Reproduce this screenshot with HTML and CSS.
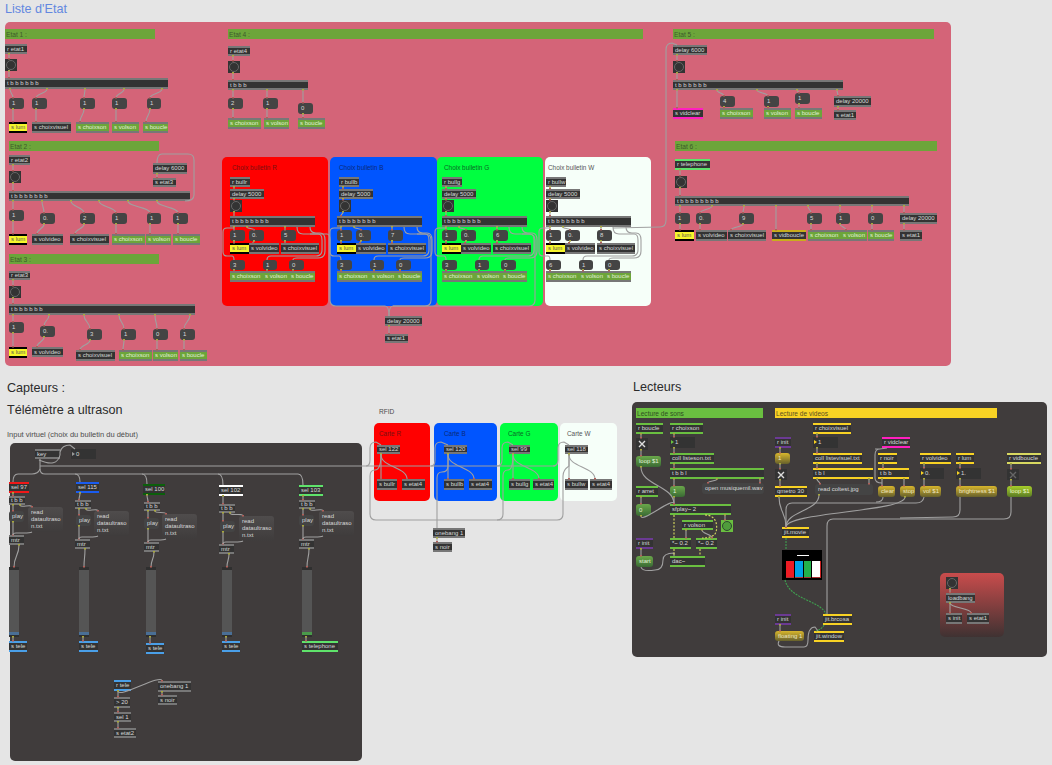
FILE: index.html
```html
<!DOCTYPE html>
<html lang="fr">

<head>
 <meta charset="UTF-8">
 <meta name="viewport" content="width=device-width">
 <title>Liste d'Etat</title>
 <link rel="stylesheet" href="styles.css">
</head>

<body>

 <div class="canvas" id="canvas">

  <h1 class="titre titre-etat">Liste d'Etat</h1>
  <div class="panel panel-etat"></div>

  <div class="panel choix choix-r"><span>Choix bulletin R</span></div>
  <div class="panel choix choix-b"><span>Choix bulletin B</span></div>
  <div class="panel choix choix-g"><span>Choix bulletin G</span></div>
  <div class="panel choix choix-w"><span>Choix bulletin W</span></div>

  <h2 class="titre titre-capteurs">Capteurs :</h2>
  <h2 class="titre titre-telemetre">Télémètre a ultrason</h2>
  <p class="legende legende-input">Input virtuel (choix du bulletin du début)</p>
  <div class="panel panel-capteurs"></div>

  <p class="legende legende-rfid">RFID</p>
  <div class="panel carte carte-r"><span>Carte R</span></div>
  <div class="panel carte carte-b"><span>Carte B</span></div>
  <div class="panel carte carte-g"><span>Carte G</span></div>
  <div class="panel carte carte-w"><span>Carte W</span></div>

  <h2 class="titre titre-lecteurs">Lecteurs</h2>
  <div class="panel panel-lecteurs"></div>
  <div class="panel panel-init"></div>

  <div class="pwindow">
   <i class="dash"></i>
   <i class="barre rouge"></i><i class="barre bleu"></i><i class="barre vert"></i><i class="barre blanc"></i>
  </div>

 </div>

 <script src="patch.js"></script>

</body>

</html>
```

FILE: styles.css
```css
/* Page */
* {
    margin: 0;
    padding: 0;
    box-sizing: border-box;
}

body {
    background-color: #e5e5e5;
    font-family: "Liberation Sans", Arial, sans-serif;
}

.canvas {
    position: relative;
    width: 1052px;
    height: 765px;
    overflow: hidden;
}

/* Titres */
.titre {
    position: absolute;
    font-weight: normal;
    font-size: 12.6px;
    line-height: 14px;
    color: #2b2b2b;
    white-space: nowrap;
}

.titre-etat { left: 5px; top: 2px; color: #6388e0; }
.titre-capteurs { left: 7px; top: 381px; }
.titre-telemetre { left: 7px; top: 403px; }
.titre-lecteurs { left: 633px; top: 380px; }

.legende {
    position: absolute;
    font-size: 7.5px;
    line-height: 8px;
    color: #4c4c4c;
    white-space: nowrap;
}

.legende-input { left: 7px; top: 431px; }
.legende-rfid { left: 379px; top: 408px; font-size: 6.6px; }

/* Panneaux */
.panel {
    position: absolute;
    border-radius: 5px;
}

.panel-etat { left: 5px; top: 22px; width: 946px; height: 344px; background-color: #d46478; }
.panel-capteurs { left: 10px; top: 443px; width: 352px; height: 318px; background-color: #403c3c; }
.panel-lecteurs { left: 632px; top: 402px; width: 415px; height: 255px; background-color: #403c3c; }
.panel-init {
    left: 940px;
    top: 573px;
    width: 64px;
    height: 64px;
    background: linear-gradient(#c94c4c, #3f3232);
}

.choix { top: 157px; height: 149px; font-size: 6.4px; }
.choix span { position: absolute; top: 7px; white-space: nowrap; }
.choix-r { left: 222px; width: 106px; background-color: #ff0000; color: #7a1010; }
.choix-r span { left: 10px; }
.choix-b { left: 330px; width: 107px; background-color: #0055ff; color: #0b2a78; }
.choix-b span { left: 9px; }
.choix-g { left: 437px; width: 106px; background-color: #00ff40; color: #0a6a25; }
.choix-g span { left: 7px; }
.choix-w { left: 545px; width: 106px; background-color: #f6fff9; color: #555; }
.choix-w span { left: 3px; }

.carte { top: 423px; height: 78px; font-size: 6.4px; }
.carte span { position: absolute; top: 7px; white-space: nowrap; }
.carte-r { left: 374px; width: 56px; background-color: #ff0000; color: #7a1010; }
.carte-r span { left: 5px; }
.carte-b { left: 434px; width: 63px; background-color: #0055ff; color: #0b2a78; }
.carte-b span { left: 10px; }
.carte-g { left: 500px; width: 58px; background-color: #00ff40; color: #0a6a25; }
.carte-g span { left: 8px; }
.carte-w { left: 560px; width: 57px; background-color: #f6fff9; color: #555; }
.carte-w span { left: 7px; }

/* Objets du patch */
.n {
    position: absolute;
    display: flex;
    align-items: center;
    padding-left: 2px;
    font-size: 6px;
    line-height: 7px;
    color: #d8d8d8;
    white-space: pre;
    overflow: hidden;
}

.obj {
    background-color: #333;
    border-top: 2px solid var(--trait, #777);
    border-bottom: 2px solid var(--trait, #777);
}

.snd { background-color: #6ca53a; color: #e2efd6; }
.lum { background-color: #f6f62c; color: #555; --trait: #000; }
.mag { --trait: #ff1fbf; }
.rou { --trait: #f01818; }
.ble { --trait: #1a5cf0; }
.sap { --trait: #0b5f0b; }
.bla { --trait: #fff; }
.ver { --trait: #5fe36b; }
.cie { --trait: #4a9fe8; }
.lim { --trait: #6abf40; }
.jau { --trait: #f8d224; }
.vio { --trait: #6b3a93; }
.pal { --trait: #d8d860; }
.vid { --trait: #c9ad1c; }

.msg {
    background-color: #444;
    border-radius: 3px;
    padding-left: 3px;
}

.long {
    background: linear-gradient(#4f4c4c, #3f3c3c);
    align-items: flex-start;
    padding: 2px 0 0 3px;
    line-height: 7px;
}

.gv { background: linear-gradient(#6aa84a, #3a6a34); color: #e3f0da; }
.gj { background: linear-gradient(#d8b62c, #66602c); color: #efe6c0; }
.gl { background: linear-gradient(#a8cf2a, #5a7a24); color: #eef5cc; }

.num { background-color: #333; padding-left: 5px; }
.num::before {
    content: "";
    position: absolute;
    left: 1px;
    top: 3px;
    border-left: 3px solid var(--trait, #999);
    border-top: 2.5px solid transparent;
    border-bottom: 2.5px solid transparent;
}

.note {
    background-color: #6ca53a;
    color: #3d5a2c;
    padding-left: 1px;
    font-size: 6.6px;
}

.note-v { background-color: #6abf40; color: #2f4f22; }
.note-j { background-color: #f8d224; color: #5c5020; }

.bang {
    background-color: #333;
    padding: 0;
    justify-content: center;
}

.bang::before {
    content: "";
    width: 8px;
    height: 8px;
    border: 1px solid #666;
    border-radius: 50%;
}

.bang-v { background-color: #6abf40; }
.bang-v::before { border-color: #2e4a2e; background-color: #4f9c3c; }

.tog {
    background-color: #333;
    padding: 0;
    justify-content: center;
}

.tog svg { width: 8px; height: 8px; stroke: #ddd; stroke-width: 1.4; }
.tog-off svg { stroke: #666; }

.slider {
    background-color: #555;
    border-top: 3px solid #2f2f2f;
    border-bottom: 2px solid #2f2f2f;
    padding: 0;
    display: block;
}

.slider i {
    position: absolute;
    left: 0;
    right: 0;
    bottom: 0;
    height: 3px;
    background-color: #4a6f96;
}

.slider-v i { background-color: #4a9a4a; }

/* Petites marques d'attribut */
.attr::after {
    content: "";
    position: absolute;
    top: -2px;
    right: 3px;
    width: 4px;
    height: 1px;
    background-color: #d0d0d0;
}

/* Fenetre video */
.pwindow {
    position: absolute;
    left: 782px;
    top: 550px;
    width: 40px;
    height: 30px;
    background-color: #000;
    z-index: 1;
}

.pwindow i { position: absolute; }
.dash { left: 15px; top: 5px; width: 12px; height: 1px; background-color: #fff; }
.barre { top: 11px; height: 17px; border-bottom: 1px solid #a33; }
.rouge { left: 4px; width: 8px; background-color: #ed1c24; }
.bleu { left: 13px; width: 8px; background-color: #00a2e8; }
.vert { left: 22px; width: 7px; background-color: #22b14c; }
.blanc { left: 30px; width: 9px; background-color: #fff; border-right: 1px solid #c22; }

/* Cordons */
.cords {
    position: absolute;
    left: 0;
    top: 0;
    z-index: 2;
    pointer-events: none;
}

.cords path { fill: none; stroke: #a0a0a0; stroke-width: 1.1; }
.cords .sig { stroke: #d8dc60; stroke-dasharray: 2 1.5; }
.cords .vid-c { stroke: #3f9f4f; stroke-dasharray: 2 1; }
.cords .out { fill: #a8a83a; }
.cords .in { fill: #b0605a; }
```

FILE: patch.js
```js
// Dessine le patch : objets puis cordons.
const canvas = document.getElementById('canvas')

// [x1, y1, x2, y2, texte, classes]
const noeuds = [
 // Etat 1
 [5, 29, 155, 39, 'Etat 1 :', 'note'],
 [5, 44, 27, 54, 'r etat1', 'obj'],
 [5, 59, 17, 71, '', 'bang'],
 [5, 78, 168, 89, 't b b b b b b', 'obj'],
 [9, 98, 24, 109, '1', 'msg'], [32, 98, 47, 109, '1', 'msg'], [80, 98, 95, 109, '1', 'msg'],
 [112, 98, 127, 109, '1', 'msg'], [147, 98, 161, 109, '1', 'msg'],
 [9, 122, 27, 133, 's lum', 'obj lum'], [32, 122, 71, 133, 's choixvisuel', 'obj'],
 [76, 122, 109, 133, 's choixson', 'obj snd'], [112, 122, 139, 133, 's volson', 'obj snd'],
 [143, 122, 168, 133, 's boucle', 'obj snd'],
 // Etat 4
 [228, 29, 643, 39, 'Etat 4 :', 'note'],
 [228, 46, 250, 56, 'r etat4', 'obj'],
 [228, 61, 240, 73, '', 'bang'],
 [228, 80, 308, 90, 't b b b', 'obj'],
 [228, 98, 243, 109, '2', 'msg'], [263, 98, 278, 109, '1', 'msg'], [298, 103, 313, 114, '0', 'msg'],
 [228, 118, 261, 129, 's choixson', 'obj snd'], [264, 118, 289, 129, 's volson', 'obj snd'],
 [298, 118, 325, 129, 's boucle', 'obj snd'],
 // Etat 2
 [9, 141, 159, 151, 'Etat 2 :', 'note'],
 [9, 155, 30, 165, 'r etat2', 'obj'],
 [9, 171, 21, 183, '', 'bang'],
 [153, 163, 187, 174, 'delay 6000', 'obj attr'],
 [153, 178, 176, 187, 's etat3', 'obj'],
 [9, 191, 190, 201, 't b b b b b b b', 'obj'],
 [9, 210, 24, 221, '1', 'msg'], [40, 213, 55, 224, '0.', 'msg'], [80, 213, 95, 224, '2', 'msg'],
 [112, 213, 127, 224, '1', 'msg'], [147, 213, 161, 224, '1', 'msg'], [173, 213, 188, 224, '1', 'msg'],
 [9, 234, 27, 245, 's lum', 'obj lum'], [32, 234, 63, 245, 's volvideo', 'obj'],
 [70, 234, 109, 245, 's choixvisuel', 'obj'], [112, 234, 145, 245, 's choixson', 'obj snd'],
 [146, 234, 171, 245, 's volson', 'obj snd'], [173, 234, 200, 245, 's boucle', 'obj snd'],
 // Etat 3
 [9, 254, 159, 264, 'Etat 3 :', 'note'],
 [9, 271, 30, 280, 'r etat3', 'obj'],
 [9, 286, 21, 298, '', 'bang'],
 [9, 304, 195, 315, 't b b b b b b', 'obj'],
 [9, 322, 24, 333, '1', 'msg'], [40, 326, 55, 337, '0.', 'msg'], [87, 329, 102, 340, '3', 'msg'],
 [121, 329, 136, 340, '1', 'msg'], [153, 329, 168, 340, '0', 'msg'], [180, 329, 195, 340, '1', 'msg'],
 [9, 347, 27, 358, 's lum', 'obj lum'], [32, 347, 63, 357, 's volvideo', 'obj'],
 [76, 350, 115, 361, 's choixvisuel', 'obj'], [119, 350, 152, 361, 's choixson', 'obj snd'],
 [153, 350, 178, 361, 's volson', 'obj snd'], [180, 350, 207, 361, 's boucle', 'obj snd'],
 // Etat 5
 [673, 29, 934, 39, 'Etat 5 :', 'note'],
 [673, 45, 707, 55, 'delay 6000', 'obj attr'],
 [673, 61, 685, 73, '', 'bang'],
 [673, 80, 843, 90, 't b b b b b b', 'obj'],
 [720, 96, 735, 107, '4', 'msg'], [764, 96, 779, 107, '1', 'msg'], [795, 93, 810, 104, '1', 'msg'],
 [834, 96, 871, 107, 'delay 20000', 'obj attr'],
 [673, 108, 703, 119, 's vidclear', 'obj mag'], [720, 108, 753, 119, 's choixson', 'obj snd'],
 [764, 108, 791, 119, 's volson', 'obj snd'], [795, 108, 822, 119, 's boucle', 'obj snd'],
 [834, 110, 856, 120, 's etat1', 'obj'],
 // Etat 6
 [675, 141, 937, 151, 'Etat 6 :', 'note'],
 [675, 159, 710, 170, 'r telephone', 'obj ver'],
 [675, 176, 687, 188, '', 'bang'],
 [675, 196, 909, 206, 't b b b b b b b b', 'obj'],
 [675, 213, 690, 224, '1', 'msg'], [696, 213, 711, 224, '0.', 'msg'], [739, 213, 754, 224, '9', 'msg'],
 [807, 213, 822, 224, '5', 'msg'], [836, 213, 850, 224, '1', 'msg'], [868, 213, 883, 224, '0', 'msg'],
 [900, 213, 937, 224, 'delay 20000', 'obj attr'],
 [675, 230, 694, 241, 's lum', 'obj lum'], [696, 230, 727, 241, 's volvideo', 'obj'],
 [728, 230, 766, 241, 's choixvisuel', 'obj'], [772, 230, 806, 241, 's vidboucle', 'obj vid'],
 [808, 230, 841, 241, 's choixson', 'obj snd'], [841, 230, 867, 241, 's volson', 'obj snd'],
 [868, 230, 894, 241, 's boucle', 'obj snd'], [900, 230, 922, 241, 's etat1', 'obj'],
 [385, 316, 422, 326, 'delay 20000', 'obj attr'],
 [385, 334, 408, 343, 's etat1', 'obj'],
 // Capteurs
 [35, 449, 60, 459, 'key', 'obj'],
 [71, 449, 96, 459, '0', 'num'],
 [114, 680, 131, 691, 'r tele', 'obj cie'],
 [114, 697, 130, 708, '> 20', 'obj'],
 [114, 712, 131, 722, 'sel 1', 'obj attr'],
 [114, 728, 136, 738, 's etat2', 'obj'],
 [158, 681, 191, 692, 'onebang 1', 'obj attr'],
 [158, 695, 177, 705, 's noir', 'obj'],
 // RFID
 [377, 445, 400, 454, 'sel 122', 'obj attr'], [444, 445, 467, 454, 'sel 120', 'obj attr'],
 [509, 445, 530, 454, 'sel 99', 'obj attr'], [565, 445, 588, 454, 'sel 118', 'obj attr'],
 [377, 479, 397, 490, 's bullr', 'obj'], [402, 479, 425, 490, 's etat4', 'obj'],
 [444, 479, 464, 490, 's bullb', 'obj'], [469, 479, 492, 490, 's etat4', 'obj'],
 [509, 479, 530, 490, 's bullg', 'obj'], [533, 479, 554, 490, 's etat4', 'obj'],
 [565, 479, 588, 490, 's bullw', 'obj'], [590, 479, 612, 490, 's etat4', 'obj'],
 [433, 528, 465, 538, 'onebang 1', 'obj attr'],
 [433, 542, 452, 552, 's noir', 'obj'],
 // Lecture de sons
 [636, 408, 763, 418, 'Lecture de sons', 'note note-v'],
 [636, 423, 663, 434, 'r boucle', 'obj lim'],
 [636, 438, 648, 450, 'x', 'tog'],
 [636, 456, 661, 467, 'loop $1', 'msg gv'],
 [636, 486, 658, 497, 'r arret', 'obj lim'],
 [636, 504, 651, 516, '0', 'msg gv'],
 [636, 538, 653, 549, 'r init', 'obj vio'],
 [636, 556, 653, 567, 'start', 'msg gv'],
 [670, 423, 703, 434, 'r choixson', 'obj lim'],
 [670, 437, 695, 448, '1', 'num lim'],
 [670, 453, 714, 464, 'coll listeson.txt', 'obj lim'],
 [670, 468, 764, 479, 't b b l', 'obj lim'],
 [670, 486, 685, 497, '1', 'msg gv'],
 [702, 483, 764, 494, 'open musiquemil.wav', 'msg'],
 [670, 504, 731, 515, 'sfplay~ 2', 'obj lim attr'],
 [682, 520, 713, 530, 'r volson', 'obj lim'],
 [721, 520, 733, 532, '', 'bang bang-v'],
 [670, 538, 691, 549, '*~ 0.2', 'obj lim'],
 [696, 538, 717, 549, '*~ 0.2', 'obj lim'],
 [670, 556, 705, 567, 'dac~', 'obj lim'],
 // Lecture de videos
 [775, 408, 997, 418, 'Lecture de videos', 'note note-j'],
 [775, 437, 791, 448, 'r init', 'obj vio'],
 [775, 453, 790, 464, '1', 'msg gj'],
 [775, 469, 787, 480, 'x', 'tog'],
 [775, 486, 807, 497, 'qmetro 30', 'obj jau'],
 [813, 423, 851, 434, 'r choixvisuel', 'obj jau'],
 [813, 437, 838, 448, '1', 'num jau'],
 [813, 453, 862, 464, 'coll listevisuel.txt', 'obj jau'],
 [813, 468, 873, 479, 't b l', 'obj jau'],
 [815, 484, 873, 495, 'read coltest.jpg', 'msg'],
 [882, 437, 910, 448, 'r vidclear', 'obj mag'],
 [878, 453, 897, 464, 'r noir', 'obj jau'],
 [878, 468, 909, 479, 't b b', 'obj jau'],
 [878, 486, 895, 497, 'clear', 'msg gj'],
 [900, 486, 915, 497, 'stop', 'msg gj'],
 [920, 453, 951, 464, 'r volvideo', 'obj jau'],
 [920, 468, 944, 479, '0.', 'num jau'],
 [920, 486, 941, 497, 'vol $1', 'msg gj'],
 [956, 453, 974, 464, 'r lum', 'obj jau'],
 [956, 468, 981, 479, '1.', 'num jau'],
 [956, 486, 997, 497, 'brightness $1', 'msg gj'],
 [1007, 453, 1041, 464, 'r vidboucle', 'obj pal'],
 [1007, 469, 1019, 480, 'x', 'tog tog-off'],
 [1007, 486, 1032, 497, 'loop $1', 'msg gl'],
 [782, 527, 809, 538, 'jit.movie', 'obj jau'],
 [823, 614, 852, 625, 'jit.brcosa', 'obj jau'],
 [775, 614, 791, 625, 'r init', 'obj vio'],
 [775, 631, 804, 641, 'floating 1', 'msg gj'],
 [814, 631, 844, 642, 'jit.window', 'obj jau'],
 [946, 577, 958, 589, '', 'bang'],
 [946, 593, 975, 603, 'loadbang', 'obj'],
 [946, 613, 962, 624, 's init', 'obj'],
 [967, 613, 989, 624, 's etat1', 'obj']
]

// [x1, y1, x2, y2] : cordon courbe, sortie vers entree
const cordons = [
 [9, 54, 9, 59], [9, 71, 9, 78],
 [10, 89, 13, 98], [47, 89, 36, 98], [85, 89, 84, 98], [124, 89, 116, 98], [162, 89, 150, 98],
 [13, 109, 13, 122], [36, 109, 36, 122], [84, 109, 80, 122], [116, 109, 116, 122], [150, 109, 146, 122],
 [233, 56, 233, 61], [233, 73, 233, 80], [233, 90, 233, 98], [267, 90, 267, 98], [303, 90, 303, 103],
 [233, 109, 233, 118], [267, 109, 267, 118], [303, 114, 303, 118],
 [13, 165, 13, 171], [13, 183, 13, 191],
 [13, 201, 13, 210], [42, 201, 44, 213], [71, 201, 84, 213], [99, 201, 116, 213], [128, 201, 150, 213], [157, 201, 178, 213],
 [13, 221, 13, 234], [44, 224, 37, 234], [84, 224, 75, 234], [116, 224, 116, 234], [150, 224, 150, 234], [178, 224, 178, 234],
 [157, 174, 157, 178],
 [13, 280, 13, 286], [13, 298, 13, 304],
 [13, 315, 13, 322], [49, 315, 44, 326], [84, 315, 90, 329], [119, 315, 124, 329], [155, 315, 157, 329], [190, 315, 184, 329],
 [13, 333, 13, 347], [44, 337, 37, 347], [90, 340, 80, 350], [124, 340, 123, 350], [157, 340, 157, 350], [184, 340, 184, 350],
 [677, 55, 677, 61], [677, 73, 677, 80],
 [677, 90, 677, 108], [717, 90, 724, 96], [757, 90, 768, 96], [797, 90, 799, 93], [837, 90, 838, 96],
 [724, 107, 724, 108], [768, 107, 768, 108], [799, 104, 799, 108], [838, 107, 838, 110],
 [680, 170, 680, 176], [680, 188, 680, 196],
 [680, 206, 680, 213], [712, 206, 700, 213], [744, 206, 743, 213], [776, 206, 776, 230],
 [808, 206, 811, 213], [840, 206, 840, 213], [872, 206, 872, 213], [904, 206, 904, 213],
 [680, 224, 680, 230], [700, 224, 700, 230], [743, 224, 731, 230], [811, 224, 811, 230],
 [840, 224, 846, 230], [872, 224, 872, 230], [904, 224, 904, 230],
 [389, 326, 389, 334],
 // RFID
 [381, 454, 381, 479], [381, 455, 407, 479], [448, 454, 448, 479], [448, 455, 474, 479],
 [513, 454, 513, 479], [513, 455, 539, 479], [569, 454, 569, 479], [569, 455, 595, 479],
 [437, 538, 437, 542],
 // Capteurs bas
 [118, 691, 118, 697], [118, 708, 118, 712], [118, 722, 118, 728], [118, 691, 162, 681], [162, 692, 162, 695],
 // Sons
 [641, 434, 641, 438], [641, 450, 641, 456], [641, 467, 674, 504], [641, 497, 641, 504],
 [641, 516, 674, 504], [641, 549, 641, 556],
 [674, 434, 674, 437], [674, 448, 674, 453], [674, 464, 674, 468], [674, 479, 674, 486], [674, 497, 674, 504],
 [717, 479, 708, 483], [760, 479, 760, 483], [725, 515, 725, 520],
 [686, 530, 686, 538], [702, 530, 712, 538],
 // Videos
 [780, 448, 780, 453], [780, 464, 780, 469], [780, 480, 780, 486], [779, 497, 786, 527],
 [817, 434, 817, 437], [817, 448, 817, 453], [817, 464, 817, 468], [817, 479, 820, 484], [869, 479, 869, 484],
 [883, 464, 883, 468], [882, 479, 882, 486], [904, 479, 904, 486],
 [924, 464, 924, 468], [924, 479, 924, 486], [960, 464, 960, 468], [960, 479, 960, 486],
 [1011, 464, 1011, 469], [1011, 480, 1011, 486],
 [819, 495, 786, 527], [905, 497, 786, 527],
 [780, 625, 780, 631],
 [950, 589, 950, 593], [950, 603, 950, 613], [950, 603, 971, 613]
]

// Cordons avec coudes, ecrits a la main
const coudes = [
 'M185,201 Q194,201 194,195 L194,160 Q194,154 188,154 L162,154 Q157,154 157,163',
 'M613,228 L660,227 Q666,227 666,220 L666,50 Q666,43 672,43 L677,45',
 'M39,460 Q57,468 60,455 L60,452 Q62,445 70,445 L75,449',
 'M40,459 L40,469 Q40,474 45,474 L75,474 Q80,474 80,482',
 'M40,469 Q38,474 32,474 L18,474 Q13,474 13,482',
 'M75,474 L142,474 Q147,474 147,484',
 'M142,474 L218,474 Q223,474 223,485',
 'M218,474 L298,474 Q303,474 303,485',
 'M40,466 L555,466',
 'M366,466 Q370,466 370,460 L370,448 Q370,442 376,442 L381,445',
 'M431,466 Q435,466 435,460 L435,448 Q435,442 441,442 L448,445',
 'M497,466 Q502,466 502,460 L502,448 Q502,442 508,442 L513,445',
 'M553,466 Q558,466 558,460 L558,448 Q558,442 564,442 L569,445',
 'M381,454 Q381,470 375,470 Q370,470 370,476 L370,514 Q370,520 376,520 L557,520 Q563,520 563,514 L563,476 Q563,470 569,466 L569,454',
 'M513,454 Q513,470 508,470 Q503,470 503,476 L503,514 Q503,520 497,520',
 'M448,454 L448,466 Q448,472 442,472 Q437,472 437,478 L437,528',
 'M641,567 Q642,572 655,570 Q663,570 663,560 Q663,553 674,553 L674,556',
 'M875,449 Q875,449 880,449 L887,448 M880,449 Q875,449 875,455 L875,478 Q875,483 882,483',
 'M779,641 Q776,647 785,647 L804,647 Q808,647 808,640 Q808,627 815,627 L818,631',
 'M924,497 Q923,503 916,503 L792,503 Q786,503 786,510 L786,527',
 'M883,497 Q883,502 876,502',
 'M960,497 L960,510 Q960,517 953,517 L900,518',
 'M1011,497 L1011,512 Q1011,519 1004,519 L833,519 Q827,519 827,526 L827,614',
 'M310,234 L327,234 Q330,234 330,240 L330,300 Q330,306 336,306 L385,306 Q389,306 389,316',
 'M417,234 L425,234 Q431,234 431,240 L431,300 Q431,306 425,306 L393,306 Q389,306 389,316',
 'M522,234 L528,234 Q535,234 535,240 L535,300 Q535,306 529,306 L393,306'
]

// Cordons de signal (tirets)
const signaux = [
 ['sig', 'M674,515 L674,538'],
 ['sig', 'M705,515 C716,515 718,525 716,532 Q714,538 702,538'],
 ['sig', 'M674,549 L674,556'],
 ['sig', 'M700,549 L700,556'],
 ['vid-c', 'M786,538 L786,550'],
 ['vid-c', 'M785,580 C790,600 820,600 826,614'],
 ['vid-c', 'M824,625 Q822,629 816,631']
]

function place(el, x1, y1, x2, y2) {
 el.style.left = x1 + 'px'
 el.style.top = y1 + 'px'
 el.style.width = (x2 - x1) + 'px'
 el.style.height = (y2 - y1) + 'px'
}

function ajouteNoeud(x1, y1, x2, y2, texte, classes) {
 const el = document.createElement('div')
 el.className = 'n ' + classes
 place(el, x1, y1, x2, y2)
 if (classes.startsWith('tog')) {
  el.innerHTML = '<svg viewBox="0 0 8 8"><path d="M1 1 L7 7 M7 1 L1 7"/></svg>'
 } else {
  el.textContent = texte
 }
 canvas.appendChild(el)
}

// Texte pose sur le bandeau vert qui regroupe trois objets send
function ajouteSousTexte(x, texte) {
 const el = document.createElement('div')
 el.className = 'n snd'
 place(el, x, 273, x + 26, 280)
 el.textContent = texte
 canvas.appendChild(el)
}

noeuds.forEach(n => ajouteNoeud(...n))

// Les quatre boites "Choix bulletin"
const choix = [
 { rx: 230, tx: 230, l: 'r', c: [1, '0.', 5, 3, 1, 0] },
 { rx: 339, tx: 337, l: 'b', c: [1, '0.', 7, 3, 1, 0] },
 { rx: 442, tx: 442, l: 'g', c: [1, '0.', 6, 3, 1, 0] },
 { rx: 546, tx: 546, l: 'w', c: [1, '0.', 8, 6, 1, 0] }
]

choix.forEach(({ rx, tx, l, c }) => {
 ajouteNoeud(rx, 177, rx + 20, 187, 'r bull' + l, 'obj')
 ajouteNoeud(rx, 189, rx + 34, 199, 'delay 5000', 'obj attr')
 ajouteNoeud(rx, 200, rx + 12, 212, '', 'bang')
 ajouteNoeud(tx, 216, tx + 85, 227, 't b b b b b b b', 'obj')
 ajouteNoeud(tx, 230, tx + 15, 241, String(c[0]), 'msg')
 ajouteNoeud(tx + 19, 230, tx + 34, 241, c[1], 'msg')
 ajouteNoeud(tx + 51, 230, tx + 66, 241, String(c[2]), 'msg')
 ajouteNoeud(tx, 243, tx + 19, 254, 's lum', 'obj lum')
 ajouteNoeud(tx + 19, 243, tx + 49, 254, 's volvideo', 'obj')
 ajouteNoeud(tx + 51, 243, tx + 89, 254, 's choixvisuel', 'obj')
 ajouteNoeud(tx, 260, tx + 15, 270, String(c[3]), 'msg')
 ajouteNoeud(tx + 33, 260, tx + 47, 270, String(c[4]), 'msg')
 ajouteNoeud(tx + 59, 260, tx + 74, 270, String(c[5]), 'msg')
 ajouteNoeud(tx, 271, tx + 85, 282, 's choixson', 'obj snd')
 ajouteSousTexte(tx + 33, 's volson')
 ajouteSousTexte(tx + 59, 's boucle')
 cordons.push(
  [rx + 4, 187, rx + 4, 189], [rx + 4, 199, rx + 4, 200], [rx + 4, 212, tx + 4, 216],
  [tx + 4, 227, tx + 4, 230], [tx + 17, 227, tx + 24, 230], [tx + 55, 227, tx + 55, 230],
  [tx + 4, 241, tx + 4, 243], [tx + 24, 241, tx + 23, 243], [tx + 55, 241, tx + 55, 243],
  [tx + 4, 270, tx + 4, 271], [tx + 37, 270, tx + 37, 271], [tx + 63, 270, tx + 63, 271]
 )
 coudes.push(
  `M${tx + 4},228 L${tx - 3},228 Q${tx - 7},228 ${tx - 7},232 L${tx - 7},252 Q${tx - 7},256 ${tx - 3},256 L${tx + 2},256 Q${tx + 4},256 ${tx + 4},260`,
  `M${tx + 67},227 Q${tx + 67},234 ${tx + 73},234 L${tx + 88},234 Q${tx + 92},234 ${tx + 92},240 L${tx + 92},250 Q${tx + 92},256 ${tx + 86},256 L${tx + 41},256 Q${tx + 37},256 ${tx + 37},260`,
  `M${tx + 80},227 Q${tx + 80},233 ${tx + 86},233 L${tx + 90},233 Q${tx + 95},233 ${tx + 95},240 L${tx + 95},251 Q${tx + 95},258 ${tx + 88},258 L${tx + 67},258 Q${tx + 63},258 ${tx + 63},260`
 )
})

// Cinq colonnes du telemetre : sel, t b b, play, read, mtr, slider, s tele
const colonnes = [
 { sel: 'sel 97', c: 'rou', sx: 9, sw: 20, sy: 482, ty: 496, tx: 9, py: 511, px: 9, ry: 507, rx: 28, my: 535, mx: 9, bx: 9, ey: 641, ew: 18, e: 's tele', ec: 'cie' },
 { sel: 'sel 115', c: 'ble', sx: 76, sw: 23, sy: 482, ty: 500, tx: 75, py: 515, px: 76, ry: 511, rx: 94, my: 539, mx: 75, bx: 79, ey: 641, ew: 19, e: 's tele', ec: 'cie' },
 { sel: 'sel 100', c: 'sap', sx: 143, sw: 22, sy: 484, ty: 502, tx: 144, py: 518, px: 144, ry: 514, rx: 162, my: 542, mx: 144, bx: 146, ey: 643, ew: 18, e: 's tele', ec: 'cie' },
 { sel: 'sel 102', c: 'bla', sx: 219, sw: 24, sy: 485, ty: 504, tx: 219, py: 521, px: 220, ry: 516, rx: 239, my: 544, mx: 219, bx: 222, ey: 641, ew: 18, e: 's tele', ec: 'cie' },
 { sel: 'sel 103', c: 'ver', sx: 299, sw: 24, sy: 485, ty: 500, tx: 299, py: 515, px: 299, ry: 511, rx: 319, my: 539, mx: 299, bx: 302, ey: 641, ew: 36, e: 's telephone', ec: 'ver' }
]

colonnes.forEach((k, i) => {
 ajouteNoeud(k.sx, k.sy, k.sx + k.sw, k.sy + 11, k.sel, 'obj attr ' + k.c)
 ajouteNoeud(k.tx, k.ty, k.tx + 16, k.ty + 9, 't b b', 'obj')
 ajouteNoeud(k.px, k.py, k.px + 15, k.py + 11, 'play', 'msg')
 ajouteNoeud(k.rx, k.ry, k.rx + 35, k.ry + 25, 'read\ndataultraso\nn.txt', 'msg long')
 ajouteNoeud(k.mx, k.my, k.mx + 15, k.my + 10, 'mtr', 'obj')
 const s = document.createElement('div')
 s.className = 'n slider' + (i === 4 ? ' slider-v' : '')
 place(s, k.bx, 567, k.bx + 10, 637)
 s.appendChild(document.createElement('i'))
 canvas.appendChild(s)
 ajouteNoeud(k.bx, k.ey, k.bx + k.ew, k.ey + 11, k.e, 'obj ' + k.ec)
 const x = k.tx + 4
 cordons.push(
  [k.sx + 4, k.sy + 11, x, k.ty], [x, k.ty + 9, x, k.py], [x, k.py + 11, x, k.my],
  [k.tx + 11, k.ty + 9, k.rx + 4, k.ry], [k.mx + 10, k.my + 10, k.bx + 5, 567],
  [k.bx + 4, 637, k.bx + 4, k.ey]
 )
 coudes.push(`M${k.rx + 4},${k.ry + 25} Q${k.rx + 2},${k.my - 2} ${k.rx - 4},${k.my - 2} L${x + 3},${k.my - 2} Q${x},${k.my - 2} ${x},${k.my}`)
})

// Cordons en SVG par dessus les objets
const NS = 'http://www.w3.org/2000/svg'
const svg = document.createElementNS(NS, 'svg')
svg.setAttribute('class', 'cords')
svg.setAttribute('width', 1052)
svg.setAttribute('height', 765)

function trace(d, classe) {
 const p = document.createElementNS(NS, 'path')
 p.setAttribute('d', d)
 if (classe) p.setAttribute('class', classe)
 svg.appendChild(p)
}

function point(x, y, classe) {
 const r = document.createElementNS(NS, 'rect')
 r.setAttribute('x', x - 1)
 r.setAttribute('y', y - 1)
 r.setAttribute('width', 2)
 r.setAttribute('height', 1.5)
 r.setAttribute('class', classe)
 svg.appendChild(r)
}

cordons.forEach(([x1, y1, x2, y2]) => {
 const m = Math.max(Math.abs(y2 - y1) / 2, Math.min(Math.abs(x2 - x1) / 4, 8))
 trace(`M${x1},${y1} C${x1},${y1 + m} ${x2},${y2 - m} ${x2},${y2}`)
 point(x1, y1, 'out')
 point(x2, y2, 'in')
})

coudes.forEach(d => trace(d))
signaux.forEach(([classe, d]) => trace(d, classe))
canvas.appendChild(svg)
```
